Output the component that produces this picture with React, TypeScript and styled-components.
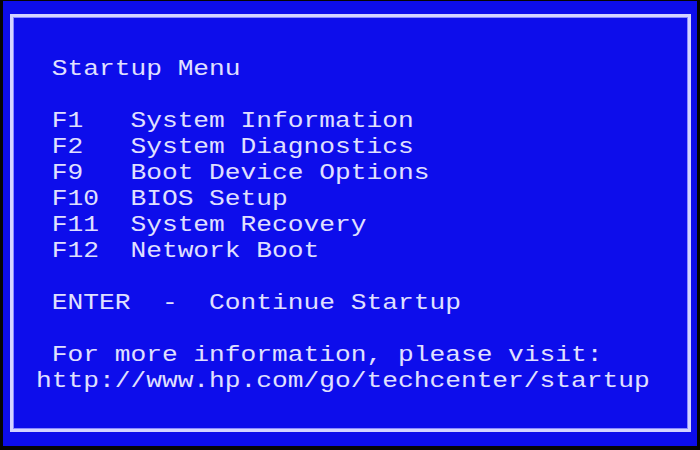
import React from "react";
import styled, { createGlobalStyle } from "styled-components";

const Global = createGlobalStyle`
  html, body { margin: 0; padding: 0; background: #000; }
  body { width: 700px; height: 450px; overflow: hidden; }
`;

const Screen = styled.div`
  box-sizing: border-box;
  width: 700px;
  height: 450px;
  background: #050505;
  padding: 1px 3px 4px 3px;
  display: flex;
`;

const BluePanel = styled.div`
  flex: 1;
  background: #0d0deb;
  padding: 13px 6px 14px 7px;
  display: flex;
`;

const Frame = styled.div`
  flex: 1;
  box-sizing: border-box;
  border: 3px solid #d4d4ff;
  box-shadow: inset 0 0 0 1px #8a8aff;
  padding: 40px 0 0 23px;
  display: flex;
  flex-direction: column;
  align-items: flex-start;
`;

const Line = styled.div`
  font-family: "Liberation Mono", "DejaVu Sans Mono", monospace;
  font-size: 22px;
  line-height: 26px;
  height: 26px;
  min-width: 1px;
  letter-spacing: 0;
  white-space: pre;
  color: #e0e0ff;
  transform: scaleX(1.192);
  transform-origin: 0 50%;
`;

const lines = [
  " Startup Menu",
  "",
  " F1   System Information",
  " F2   System Diagnostics",
  " F9   Boot Device Options",
  " F10  BIOS Setup",
  " F11  System Recovery",
  " F12  Network Boot",
  "",
  " ENTER  -  Continue Startup",
  "",
  " For more information, please visit:",
  "http://www.hp.com/go/techcenter/startup",
];

export default function App() {
  return (
    <>
      <Global />
      <Screen>
        <BluePanel>
          <Frame>
            {lines.map((t, i) => (
              <Line key={i}>{t}</Line>
            ))}
          </Frame>
        </BluePanel>
      </Screen>
    </>
  );
}
